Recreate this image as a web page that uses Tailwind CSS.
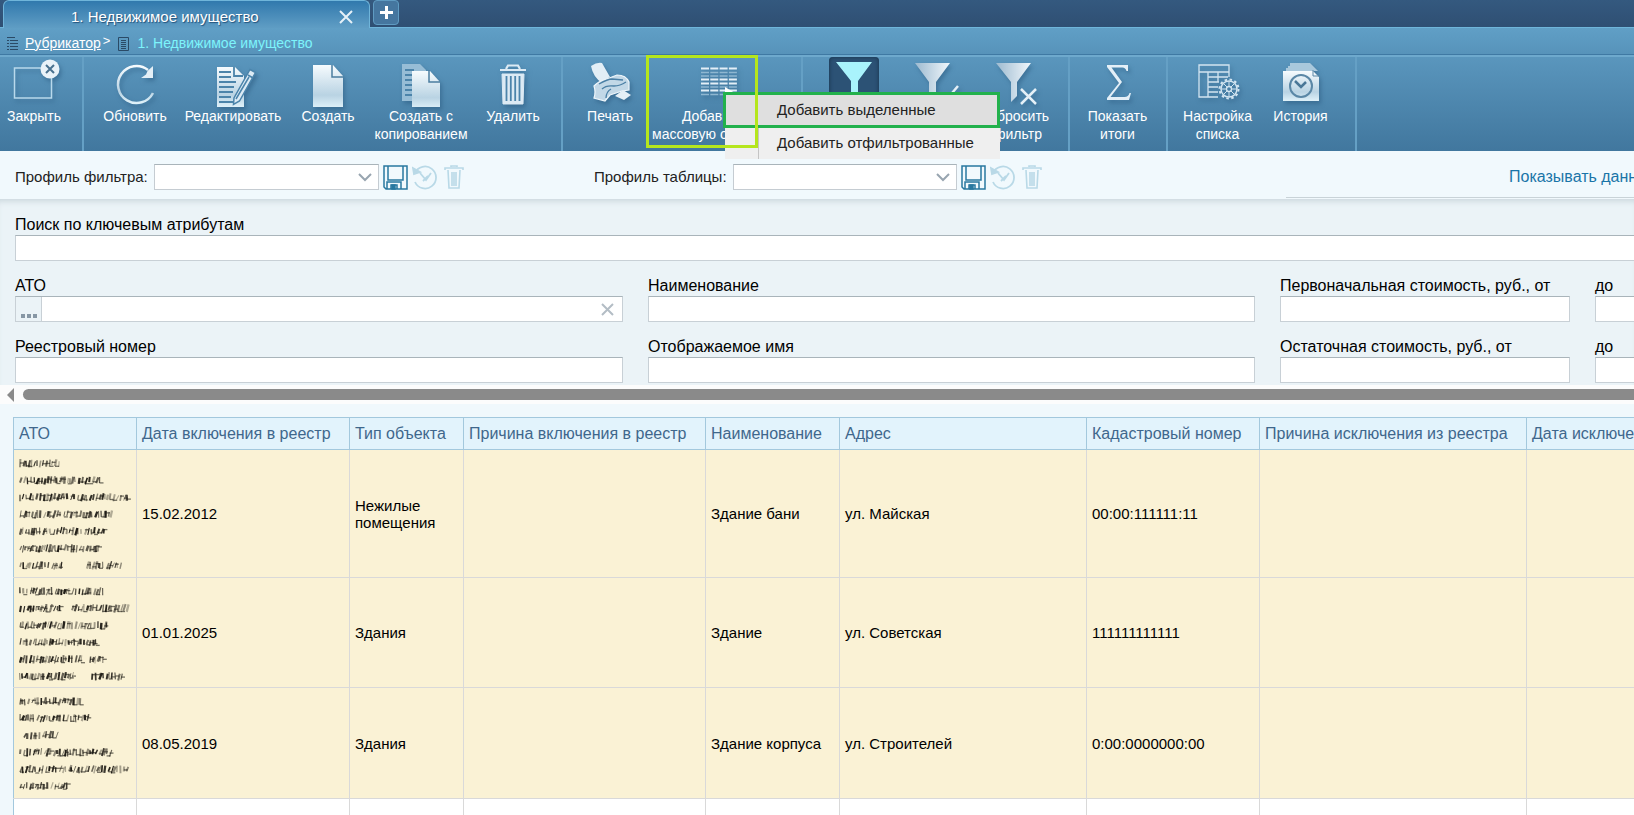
<!DOCTYPE html>
<html lang="ru">
<head>
  <meta charset="UTF-8" />
  <title>Недвижимое имущество</title>
  <script src="https://cdn.jsdelivr.net/npm/@tailwindcss/browser@4"></script>
</head>
<body class="h-screen overflow-hidden flex flex-col bg-[#f0f8fc] text-black font-['Liberation_Sans',Arial,sans-serif]">

  <!-- Shared icon gradient -->
  <svg class="absolute w-0 h-0" aria-hidden="true">
    <defs>
      <linearGradient id="ice" x1="0" y1="0" x2="0" y2="1">
        <stop offset="0" stop-color="#f6fbfe" />
        <stop offset=".7" stop-color="#b9d3e3" />
        <stop offset="1" stop-color="#dff1f9" />
      </linearGradient>
      <linearGradient id="steel" x1="0" y1="0" x2="1" y2="0">
        <stop offset="0" stop-color="#9dbad0" />
        <stop offset="1" stop-color="#f1f7fb" />
      </linearGradient>
    </defs>
  </svg>

  <!-- Tabs -->
  <div class="h-7 shrink-0 flex bg-linear-to-b from-[#34597f] to-[#2f4f73] pl-[3px] border-b border-[#6fb5da]">
    <div class="w-[367px] h-7 flex items-center pl-[67px] pr-4 rounded-t-md border border-b-0 border-[#6fb5da] bg-linear-to-b from-[#3079ad] to-[#5f9dc4] text-white">
      <span class="text-[15px] pt-1.5 [text-shadow:1px_1px_1px_#23527a]">1. Недвижимое имущество</span>
      <button class="ml-auto mt-1" aria-label="Закрыть вкладку">
        <svg class="block" width="14" height="14" viewBox="0 0 14 14" stroke="#e6f1f8" stroke-width="2"><path d="M1 1l12 12M13 1L1 13" /></svg>
      </button>
    </div>
    <button class="ml-[3px] w-[26px] h-[25px] rounded-[4px] bg-[#45769f] border border-[#5f9bc2] flex items-center justify-center" aria-label="Новая вкладка">
      <svg width="13" height="13" viewBox="0 0 13 13" stroke="#fff" stroke-width="3"><path d="M6.500 0v13M0 6.500h13" /></svg>
    </button>
  </div>

  <!-- Breadcrumbs -->
  <nav class="h-[27px] shrink-0 flex items-center pt-1 pl-[7px] text-[14px] bg-linear-to-b from-[#609fc6] to-[#5793ba] border-b border-[#3f79a3]">
    <svg class="mr-[7px] mt-px" width="11" height="14" viewBox="0 0 11 14" stroke="#2a4a66"><path d="M0 .5h8M0 3.500h2M3 3.500h8M0 6.500h2M3 6.500h8M0 9.500h2M3 9.500h8M0 12.500h2M3 12.500h8" /></svg>
    <a href="#" class="underline text-white">Рубрикатор</a>
    <span class="text-white text-[13px] pl-0.5 pb-1">&gt;</span>
    <svg class="ml-2 mr-2 mt-px" width="11" height="14" viewBox="0 0 11 14" fill="none" stroke="#2a4a66"><path d="M.5 .5h10v13h-10zM3 3.500h5M3 5.500h5M3 7.500h5M3 9.500h5M3 11.500h5" /></svg>
    <span class="text-[#7df4fb]">1. Недвижимое имущество</span>
  </nav>

  <!-- Toolbar -->
  <div class="relative z-10 h-[96px] shrink-0 flex border-t-2 border-[#6ea9cd] bg-linear-to-b from-[#5a96bd] to-[#41779e] text-white text-[14px] leading-[18px] [text-shadow:1px_1px_1px_#2b5a80]">
    <div class="w-[84px] shrink-0 border-r-2 border-[#65a0c5] flex items-start">
      <button class="w-[68px] flex flex-col items-center">
        <svg class="h-[50px] w-[68px] drop-shadow-[2px_3px_2px_#2b5a8088]" viewBox="0 0 68 50" fill="none"><path d="M14.500 11h37v30h-37z" stroke="#b9d9ec" stroke-width="1.500" /><circle cx="50" cy="12" r="9.500" fill="#e9f2f8" /><path d="M46 8l8 8M54 8l-8 8" stroke="#49718f" stroke-width="2" /></svg>
        Закрыть
      </button>
    </div>
    <div class="w-[479px] shrink-0 border-r-2 border-[#65a0c5] flex items-start pl-[11px]">
      <button class="w-[80px] flex flex-col items-center">
        <svg class="h-[50px] w-[50px] drop-shadow-[2px_3px_2px_#2b5a8088]" viewBox="0 0 50 50" fill="none"><path d="M38 13A18.500 18.500 0 1 0 43 36" stroke="url(#ice)" stroke-width="2.500" /><path d="M43 9v12H31l5-3.500 1.500-3.500z" fill="#e4eff6" /></svg>
        Обновить
      </button>
      <button class="w-[116px] flex flex-col items-center">
        <svg class="h-[50px] w-[50px] drop-shadow-[2px_3px_2px_#2b5a8088]" viewBox="0 0 50 50"><path d="M9 10h18l9 9v31H9z" fill="url(#ice)" /><path d="M26 10v9h9M11 15h12M11 20h12M11 25h17M11 30h15M11 35h14M11 40h12M11 45h14" stroke="#4c84aa" stroke-width="1.800" fill="none" /><path d="M42 12.500l5.500 3-16 28.500-6 3.500.5-6.500z" fill="#dcebf5" stroke="#4b84ab" stroke-width="1.500" /><path d="M40 18l5 3M28 42l13-22" stroke="#4b84ab" stroke-width="1.500" /></svg>
        Редактировать
      </button>
      <button class="w-[74px] flex flex-col items-center">
        <svg class="h-[50px] w-[50px] drop-shadow-[2px_3px_2px_#2b5a8088]" viewBox="0 0 50 50"><path d="M10 8h20l10 11v32H10z" fill="url(#ice)" /><path d="M29 8v12h11" fill="none" stroke="#4b7da0" stroke-width="1.500" /></svg>
        Создать
      </button>
      <button class="w-[112px] flex flex-col items-center">
        <svg class="h-[50px] w-[50px] drop-shadow-[2px_3px_2px_#2b5a8088]" viewBox="0 0 50 50"><path d="M6 7h18l6 6v31H6z" fill="#97bdd6" /><path d="M9 13h9M9 18h8M9 23h8M9 28h8M9 33h8M9 38h8" stroke="#4c84aa" stroke-width="2" /><path d="M16 14h18l10 11v27H16z" fill="url(#ice)" /><path d="M33 13v12h11" fill="none" stroke="#4b7da0" stroke-width="1.500" /></svg>
        <span>Создать с<br />копированием</span>
      </button>
      <button class="w-[72px] flex flex-col items-center">
        <svg class="h-[50px] w-[50px] drop-shadow-[2px_3px_2px_#2b5a8088]" viewBox="0 0 50 50" fill="none" stroke="#dceaf4"><path d="M12 13h26M18 12l2-3.500h10l2 3.500" stroke-width="2.200" /><path d="M14 17h22l-1 30H15z" fill="#dceaf4" stroke-width="1" /><path d="M18.500 19v25M22.800 19v25M27.200 19v25M31.500 19v25" stroke="#4c84ab" stroke-width="1.800" /></svg>
        Удалить
      </button>
    </div>
    <div class="w-[240px] shrink-0 border-r-2 border-[#65a0c5] flex items-start pl-[12px]">
      <button class="w-[70px] flex flex-col items-center">
        <svg class="h-[50px] w-[50px] drop-shadow-[2px_3px_2px_#2b5a8088]" viewBox="0 0 50 50"><path d="M6 9q6-4 11-3l8 14q-5 2-8 6-9-6-11-17z" fill="#e2eef6" /><path d="M9 29q5-5 10-6l13-5q9 0 12 7v8l-7 1-12 4-5 6-11-3q2-6 0-12z" fill="#c2d8e7" stroke="#eef6fb" stroke-width="1.200" /><path d="M14 27q9-5 13-5l11 1M17 32q4-4 12-3 6 0 12-4M21 41q0-6 5-9" fill="none" stroke="#4a7fa5" stroke-width="1.300" /><path d="M30 39l8-6 8 5-7 5z" fill="#e4eff6" /></svg>
        Печать
      </button>
      <button class="w-[147px] flex flex-col items-center">
        <svg class="h-[50px] w-[50px] drop-shadow-[2px_3px_2px_#2b5a8088]" viewBox="0 0 50 50" fill="none"><path d="M7 11.500h36M7 22.500h36M7 26.500h36M7 33.500h36" stroke="#e4eff7" stroke-width="2" stroke-dasharray="8 1.300" /><path d="M7 15.500h36M7 19h36M7 30h36M7 37.500h36" stroke="#8fb7d1" stroke-width="1.500" stroke-dasharray="8 1.300" /><path d="M31 30l10 6-10 6z" fill="#fff" /></svg>
        <span>Добавить в<br />массовую операцию</span>
      </button>
    </div>
    <div class="w-[267px] shrink-0 border-r-2 border-[#65a0c5] flex items-start pl-[10px]">
      <button class="w-[82px] flex flex-col items-center" aria-label="Показать фильтр">
        <svg class="h-[50px] w-[50px] rounded-t-[4px] bg-[#2c5275] shadow-[inset_0_0_4px_#16304a]" viewBox="0 0 50 50"><path d="M7 5h36L29 24v20l-7 5V24z" fill="#a9f3fc" /><path d="M33 36l5 5 8-5" fill="none" stroke="#a5c7da" stroke-width="2" /></svg>
      </button>
      <button class="w-[78px] flex flex-col items-center" aria-label="Применить фильтр">
        <svg class="h-[50px] w-[50px] drop-shadow-[2px_3px_2px_#2b5a8088]" viewBox="0 0 50 50"><path d="M6 6h35L27 25v16l-7 6V25z" fill="url(#steel)" /><path d="M33 37l5 5 11-13" fill="none" stroke="#e5f0f7" stroke-width="2.500" /></svg>
      </button>
      <button class="w-[90px] flex flex-col items-center">
        <svg class="h-[50px] w-[50px] drop-shadow-[2px_3px_2px_#2b5a8088]" viewBox="0 0 50 50"><path d="M3 6h35L24 25v14l-6 6V25z" fill="url(#steel)" /><path d="M28 32l15 15M43 32L28 47" fill="none" stroke="#e5f0f7" stroke-width="2.500" /></svg>
        <span>Сбросить<br />фильтр</span>
      </button>
    </div>
    <div class="w-[98px] shrink-0 border-r-2 border-[#65a0c5] flex items-start">
      <button class="w-[95px] flex flex-col items-center">
        <svg class="h-[50px] w-[50px] drop-shadow-[2px_3px_2px_#2b5a8088]" viewBox="0 0 50 50"><path d="M14 8h21v6h-1.500q-1-3.500-4-3.500H18.500L29 25 17.500 40h14q4 0 5-4H38l-2 7H14v-2l12-15L14 10z" fill="#e4eff7" /></svg>
        <span>Показать<br />итоги</span>
      </button>
    </div>
    <div class="w-[189px] shrink-0 border-r-2 border-[#65a0c5] flex items-start pl-[4px]">
      <button class="w-[91px] flex flex-col items-center">
        <svg class="h-[50px] w-[50px] drop-shadow-[2px_3px_2px_#2b5a8088]" viewBox="0 0 50 50" fill="none" stroke="#d3e5f1" stroke-width="1.300"><path d="M6 8h30v7H6zM6 15v25h19M36 15v5M6 15h9v25M25 15v10M15 20h20M15 25h11M15 30h10M15 35h10" /><circle cx="36" cy="32" r="8" stroke-width="1.500" /><circle cx="36" cy="32" r="9.500" stroke-width="2" stroke-dasharray="2.500 2.500" /><circle cx="36" cy="32" r="2.500" /><path d="M36 24v5M36 35v5M28 32h5M39 32h5M30.500 26.500l4 4M37.500 33.500l4 4M41.500 26.500l-4 4M34.500 33.500l-4 4" stroke-width="1" /></svg>
        <span>Настройка<br />списка</span>
      </button>
      <button class="w-[75px] flex flex-col items-center">
        <svg class="h-[50px] w-[50px] drop-shadow-[2px_3px_2px_#2b5a8088]" viewBox="0 0 50 50"><path d="M10 14v-3h2V9h2V6h20l8 8z" fill="#a9c8dc" /><path d="M7 14h30l6 6v24H7z" fill="url(#ice)" /><path d="M37 13v6h6" fill="none" stroke="#5a87a6" /><circle cx="25" cy="29" r="11" fill="none" stroke="#5a87a6" stroke-width="2" /><path d="M19 24l6 6 5-5" fill="none" stroke="#4a7797" stroke-width="2.500" /></svg>
        История
      </button>
    </div>

    <!-- Drop-down of the mass operation button -->
    <div class="absolute left-[725px] top-[35px] w-[275px] bg-[#efefef] text-[15px] text-[#222] [text-shadow:none] flex flex-col">
      <button class="h-9 -ml-0.5 border-[3px] border-[#22b14c] bg-[#dfdfdf] pl-[51px] text-left">Добавить выделенные</button>
      <button class="h-[31px] ml-[33px] border-l border-[#c4c4c4] pl-[18px] pb-0.5 text-left">Добавить отфильтрованные</button>
    </div>
    <div class="absolute left-[646px] -top-[2px] w-[112px] h-[93px] border-[3px] border-[#b5e61d] pointer-events-none"></div>
  </div>

  <!-- Profiles -->
  <div class="h-12 shrink-0 flex pl-[15px] text-[15px] text-[#222] bg-[#f1f9fd]">
    <div class="w-[579px] shrink-0 flex items-center pt-1">
      <label for="filterProfile" class="w-[139px]">Профиль фильтра:</label>
      <div class="relative w-[225px]">
        <select id="filterProfile" class="block w-full h-[26px] appearance-none bg-white border border-[#c5ccd2] border-t-[#a9b4ba]"></select>
        <svg class="absolute right-[7px] top-[9px]" width="14" height="9" viewBox="0 0 14 9" fill="none" stroke="#98a5b0" stroke-width="2"><path d="M1 1l6 6 6-6" /></svg>
      </div>
      <button class="ml-1" aria-label="Сохранить">
        <svg class="block" width="25" height="25" viewBox="0 0 25 25" fill="none" stroke="#2878a0" stroke-width="1.500"><path d="M1 1h23v23H3l-2-2zM5 1v14h15V1M4 24v-7h14v7M8 24v-4h6v4" /><path d="M9 20h3v4H9z" fill="#2878a0" /></svg>
      </button>
      <button class="ml-1" aria-label="Восстановить" disabled>
        <svg class="block" width="26" height="25" viewBox="0 0 26 25" fill="none" stroke="#b9d9e7" stroke-width="1.800"><path d="M3 8A11 11 0 1 1 3 17M8 8l6 7 5-7M11 16l5-5" /><path d="M1 3l1 6 6-2z" fill="#b9d9e7" /></svg>
      </button>
      <button class="ml-1.5" aria-label="Удалить профиль" disabled>
        <svg class="block" width="20" height="25" viewBox="0 0 20 25" fill="none" stroke="#b9d9e7" stroke-width="1.600"><path d="M1 5V3h18v2M7 2V1h6v1M4 5l1 18h10l1-18M8 7v14M10 7v14M12 7v14" /></svg>
      </button>
    </div>
    <div class="shrink-0 flex items-center pt-1">
      <label for="tableProfile" class="w-[139px]">Профиль таблицы:</label>
      <div class="relative w-[224px]">
        <select id="tableProfile" class="block w-full h-[26px] appearance-none bg-white border border-[#c5ccd2] border-t-[#a9b4ba]"></select>
        <svg class="absolute right-[7px] top-[9px]" width="14" height="9" viewBox="0 0 14 9" fill="none" stroke="#98a5b0" stroke-width="2"><path d="M1 1l6 6 6-6" /></svg>
      </div>
      <button class="ml-1" aria-label="Сохранить">
        <svg class="block" width="25" height="25" viewBox="0 0 25 25" fill="none" stroke="#2878a0" stroke-width="1.500"><path d="M1 1h23v23H3l-2-2zM5 1v14h15V1M4 24v-7h14v7M8 24v-4h6v4" /><path d="M9 20h3v4H9z" fill="#2878a0" /></svg>
      </button>
      <button class="ml-1" aria-label="Восстановить" disabled>
        <svg class="block" width="26" height="25" viewBox="0 0 26 25" fill="none" stroke="#b9d9e7" stroke-width="1.800"><path d="M3 8A11 11 0 1 1 3 17M8 8l6 7 5-7M11 16l5-5" /><path d="M1 3l1 6 6-2z" fill="#b9d9e7" /></svg>
      </button>
      <button class="ml-1.5" aria-label="Удалить профиль" disabled>
        <svg class="block" width="20" height="25" viewBox="0 0 20 25" fill="none" stroke="#b9d9e7" stroke-width="1.600"><path d="M1 5V3h18v2M7 2V1h6v1M4 5l1 18h10l1-18M8 7v14M10 7v14M12 7v14" /></svg>
      </button>
    </div>
    <div class="ml-auto w-[348px] shrink-0 h-[47px] pt-[14px] pl-[223px] overflow-hidden border-b border-[#c9d3d8]">
      <a href="#" class="text-base text-[#1a75a8] whitespace-nowrap">Показывать данные</a>
    </div>
  </div>

  <!-- Search form -->
  <div class="shrink-0 overflow-hidden h-[186px] bg-[#ebf3f7] shadow-[inset_0_6px_6px_-4px_#c8d5da] pl-[15px] pt-4 text-base leading-[20px]">
    <form class="w-max grid grid-cols-[608px_607px_290px_290px] gap-x-[25px] gap-y-[15px]">
      <div class="col-span-4">
        <label for="keySearch" class="block">Поиск по ключевым атрибутам</label>
        <input id="keySearch" class="block w-full h-[26px] bg-white border border-[#c8d0d6] border-t-[#a9b4ba]" />
      </div>
      <div>
        <label for="ato" class="block">АТО</label>
        <div class="flex h-[26px] bg-white border border-[#c8d0d6] border-t-[#a9b4ba]">
          <button type="button" class="w-[26px] border-r border-[#c8d0d6] bg-[#ebf3f7] flex items-end justify-center gap-0.5 pb-[3px]" aria-label="Выбрать">
            <span class="size-1 bg-[#8797a5]"></span><span class="size-1 bg-[#8797a5]"></span><span class="size-1 bg-[#8797a5]"></span>
          </button>
          <input id="ato" class="grow" />
          <button type="button" class="px-2" aria-label="Очистить">
            <svg width="13" height="13" viewBox="0 0 13 13" stroke="#b3bdc5" stroke-width="2"><path d="M1 1l11 11M12 1L1 12" /></svg>
          </button>
        </div>
      </div>
      <div>
        <label for="name" class="block">Наименование</label>
        <input id="name" class="block w-full h-[26px] bg-white border border-[#c8d0d6] border-t-[#a9b4ba]" />
      </div>
      <div>
        <label for="initialFrom" class="block">Первоначальная стоимость, руб., от</label>
        <input id="initialFrom" class="block w-full h-[26px] bg-white border border-[#c8d0d6] border-t-[#a9b4ba]" />
      </div>
      <div>
        <label for="initialTo" class="block">до</label>
        <input id="initialTo" class="block w-full h-[26px] bg-white border border-[#c8d0d6] border-t-[#a9b4ba]" />
      </div>
      <div>
        <label for="regNumber" class="block">Реестровый номер</label>
        <input id="regNumber" class="block w-full h-[26px] bg-white border border-[#c8d0d6] border-t-[#a9b4ba]" />
      </div>
      <div>
        <label for="displayName" class="block">Отображаемое имя</label>
        <input id="displayName" class="block w-full h-[26px] bg-white border border-[#c8d0d6] border-t-[#a9b4ba]" />
      </div>
      <div>
        <label for="residualFrom" class="block">Остаточная стоимость, руб., от</label>
        <input id="residualFrom" class="block w-full h-[26px] bg-white border border-[#c8d0d6] border-t-[#a9b4ba]" />
      </div>
      <div>
        <label for="residualTo" class="block">до</label>
        <input id="residualTo" class="block w-full h-[26px] bg-white border border-[#c8d0d6] border-t-[#a9b4ba]" />
      </div>
    </form>
  </div>

  <!-- Horizontal scrollbar -->
  <div class="h-[19px] shrink-0 flex items-center bg-[#fcfcfc] pl-[7px]">
    <svg width="7" height="14" viewBox="0 0 7 14" fill="#8a8a8a"><path d="M7 0v14L0 7z" /></svg>
    <div class="ml-[9px] h-[11px] grow rounded-l-full bg-[#8a8a8a]"></div>
  </div>

  <!-- Registry table -->
  <div class="grow overflow-hidden pl-[13px] pt-[13px]">
    <table class="table-fixed w-[1780px] border-collapse text-[15px] leading-[17px] border-l border-[#a3c8dd]">
      <thead>
        <tr class="h-8 bg-[#e2f3fc] text-left text-base text-[#3f678c]">
          <th class="w-[123px] px-[5px] font-normal border border-[#a3c8dd]">АТО</th>
          <th class="w-[213px] px-[5px] font-normal border border-[#a3c8dd]">Дата включения в реестр</th>
          <th class="w-[114px] px-[5px] font-normal border border-[#a3c8dd]">Тип объекта</th>
          <th class="w-[242px] px-[5px] font-normal border border-[#a3c8dd]">Причина включения в реестр</th>
          <th class="w-[134px] px-[5px] font-normal border border-[#a3c8dd]">Наименование</th>
          <th class="w-[247px] px-[5px] font-normal border border-[#a3c8dd]">Адрес</th>
          <th class="w-[173px] px-[5px] font-normal border border-[#a3c8dd]">Кадастровый номер</th>
          <th class="w-[267px] px-[5px] font-normal border border-[#a3c8dd]">Причина исключения из реестра</th>
          <th class="px-[5px] font-normal border border-[#a3c8dd]">Дата исключения из реестра</th>
        </tr>
      </thead>
      <tbody id="rows"></tbody>
    </table>
  </div>

  <script>
    // masked: [from, to] extents of each obscured line, in pixels
    const rows = [
      { h: 128, masked: [[0, 43], [0, 84], [0, 111], [0, 95], [0, 89], [0, 82], [0, 44, 67, 106]],
        cells: ["15.02.2012", "Нежилые помещения", "", "Здание бани", "ул. Майская", "00:00:111111:11", "", ""] },
      { h: 110, masked: [[0, 88], [0, 43, 52, 111], [0, 91], [0, 81], [0, 65, 70, 86], [0, 57, 72, 106]],
        cells: ["01.01.2025", "Здания", "", "Здание", "ул. Советская", "111111111111", "", ""] },
      { h: 111, masked: [[0, 63], [0, 73], [4, 40], [0, 93], [0, 112], [0, 51]],
        cells: ["08.05.2019", "Здания", "", "Здание корпуса", "ул. Строителей", "0:00:0000000:00", "", ""] },
    ];

    let seed = 7;
    function rnd() {
      seed = (seed * 16807) % 2147483647;
      return seed / 2147483647;
    }

    // broken pen strokes in place of the masked text
    function smudge(lines) {
      let out = "";
      lines.forEach((line, i) => {
        const y = i * 17 + 5;
        for (let s = 0; s < line.length; s += 2) {
          for (let x = line[s] + 1; x < line[s + 1] - 2; x += 2 + rnd() * 2) {
            const top = y + rnd() * 2.5;
            const bottom = y + 6 + rnd() * 2.5;
            const dx = rnd() * 3 - 0.5;
            out += `<path d="M${(x + dx).toFixed(1)} ${top.toFixed(1)}L${x.toFixed(1)} ${bottom.toFixed(1)}" stroke-opacity="${(0.3 + rnd() * 0.7).toFixed(2)}" stroke-width="${(1 + rnd() * 1.4).toFixed(1)}"/>`;
            if (rnd() > 0.45) out += `<path d="M${x.toFixed(1)} ${(y + 2 + rnd() * 6).toFixed(1)}h4" stroke-width="1.3" stroke-opacity=".6"/>`;
          }
        }
      });
      return `<svg class="block" width="114" height="${lines.length * 17}" fill="none" stroke="#1d1a14">${out}</svg>`;
    }

    const tbody = document.getElementById("rows");
    rows.forEach(row => {
      const tr = document.createElement("tr");
      tr.className = "bg-[#faf2d5]";
      tr.style.height = row.h + "px";
      tr.innerHTML = `<td class="pl-[5px] border-r border-b border-[#d9d9d9]">${smudge(row.masked)}</td>` +
        row.cells.map(c => `<td class="px-[5px] border-r border-b border-[#d9d9d9]">${c}</td>`).join("");
      tbody.appendChild(tr);
    });

    const next = document.createElement("tr");
    next.className = "bg-white h-[110px]";
    next.innerHTML = '<td class="border-r border-[#d9d9d9]"></td>'.repeat(9);
    tbody.appendChild(next);
  </script>
</body>
</html>
